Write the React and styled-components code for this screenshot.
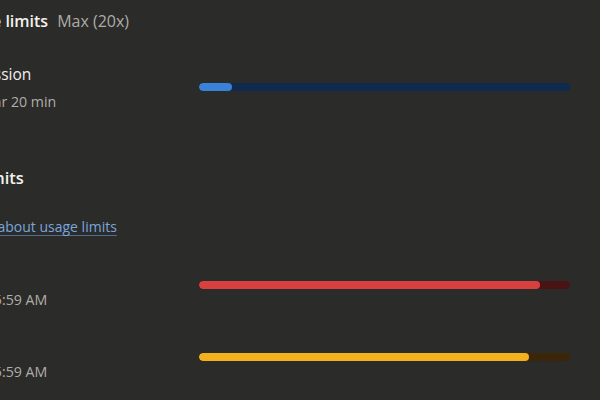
import styled, { createGlobalStyle } from "styled-components";

const GlobalStyle = createGlobalStyle`
  html, body {
    margin: 0;
    background: #2b2b2a;
    overflow: hidden;
  }
  body {
    font-family: "Open Sans", "Noto Sans", sans-serif;
    color: #f2f0ea;
  }
`;

const Page = styled.div`
  margin-left: -82px;
  padding: 10px 30px 0 0;
  width: 652px;
`;

const Header = styled.div`
  display: flex;
  align-items: baseline;
  gap: 9px;
  margin-bottom: 31px;
`;

const Title = styled.h2`
  margin: 0;
  font-size: 16px;
  font-weight: 600;
  color: #f4f2ec;
`;

const Plan = styled.span`
  font-size: 16px;
  color: #aeaca6;
`;

const Row = styled.div`
  display: grid;
  grid-template-columns: 281px 1fr;
  align-items: center;
  margin-bottom: ${(p) => p.$gap || 0}px;
`;

const Info = styled.div`
  display: flex;
  flex-direction: column;
  gap: 7px;
`;

const Label = styled.div`
  font-size: 15.5px;
  color: #f2f0ea;
`;

const Sub = styled.div`
  font-size: 14.2px;
  color: #b0aea8;
`;

const Track = styled.div`
  height: 8px;
  border-radius: 4px;
  background: ${(p) => p.$track};
  overflow: hidden;
`;

const Fill = styled.div`
  height: 100%;
  border-radius: 4px;
  background: ${(p) => p.$color};
`;

const Section = styled.h3`
  margin: 0 0 26px;
  font-size: 16.5px;
  font-weight: 600;
  color: #f4f2ec;
`;

const Learn = styled.a`
  display: inline-block;
  font-size: 14px;
  color: #7aa6dc;
  text-decoration: underline;
  text-decoration-color: #4f6f96;
  text-underline-offset: 3px;
  margin-bottom: 25px;
`;

const usage = [
  { label: "All models", reset: "Resets Thu 5:59 AM", pct: 92, color: "#d8403f", track: "#4a1414" },
  { label: "Opus only", reset: "Resets Thu 5:59 AM", pct: 89, color: "#f3b21c", track: "#3b260a" },
];

function Bar({ pct, color, track }) {
  return (
    <Track $track={track}>
      <Fill $color={color} style={{ width: `${pct}%` }} />
    </Track>
  );
}

export default function App() {
  return (
    <>
      <GlobalStyle />
      <Page>
        <Header>
          <Title>Plan usage limits</Title>
          <Plan>Max (20x)</Plan>
        </Header>

        <Row $gap={55}>
          <Info>
            <Label>Current session</Label>
            <Sub>Resets in 1 hr 20 min</Sub>
          </Info>
          <Bar pct={9} color="#3a82d8" track="#0e2a4e" />
        </Row>

        <Section>Weekly limits</Section>
        <div>
          <Learn href="#">Learn more about usage limits</Learn>
        </div>

        {usage.map((u) => (
          <Row key={u.label} $gap={24}>
            <Info>
              <Label>{u.label}</Label>
              <Sub>{u.reset}</Sub>
            </Info>
            <Bar pct={u.pct} color={u.color} track={u.track} />
          </Row>
        ))}
      </Page>
    </>
  );
}
